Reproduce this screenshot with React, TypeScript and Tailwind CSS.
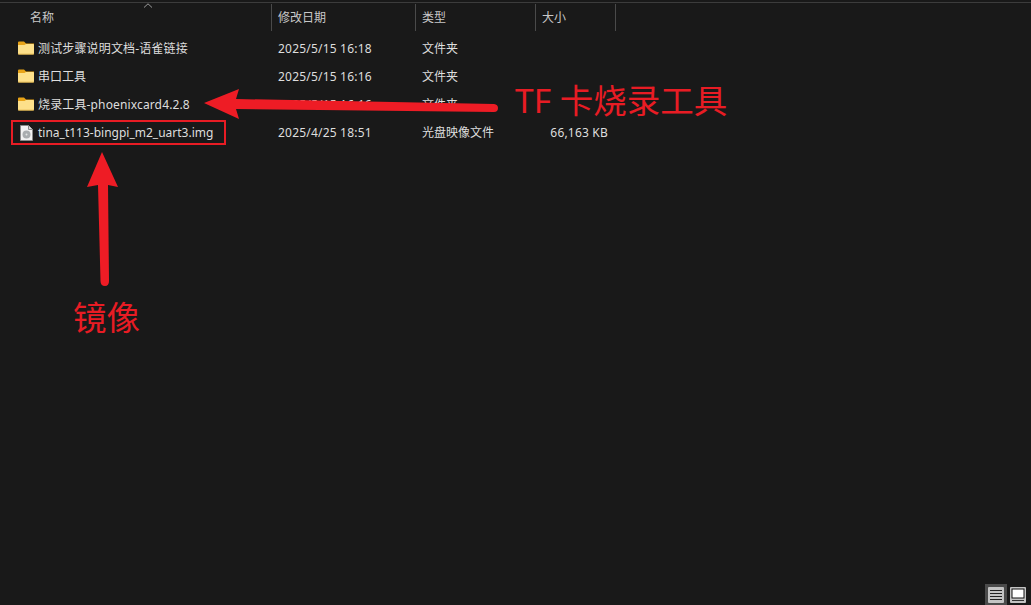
const font = 'font-["Noto_Sans","Noto_Sans_CJK_SC",sans-serif]'

const rows = [
  { name: '测试步骤说明文档-语雀链接', date: '2025/5/15 16:18', type: '文件夹', size: '', icon: 'folder', track: 'tracking-[0.15px]' },
  { name: '串口工具', date: '2025/5/15 16:16', type: '文件夹', size: '', icon: 'folder', track: '' },
  { name: '烧录工具-phoenixcard4.2.8', date: '2025/5/15 16:16', type: '文件夹', size: '', icon: 'folder', track: 'tracking-[0.14px]' },
  { name: 'tina_t113-bingpi_m2_uart3.img', date: '2025/4/25 18:51', type: '光盘映像文件', size: '66,163 KB', icon: 'disc', track: '' },
]

function FolderIcon() {
  return (
    <svg width="16" height="14" viewBox="0 0 16 14" className="mb-[2px] shrink-0">
      <path d="M0 1.5 Q0 0.5 1 0.5 H6 L8 2.5 H16 V5 H0 Z" fill="#e8a317" />
      <path d="M0 4 H6.5 L8 3 H15 Q16 3 16 4 V12.5 Q16 13.5 15 13.5 H1 Q0 13.5 0 12.5 Z" fill="#fde08a" />
      <path d="M0 12.7 H16 V13 Q16 13.5 15 13.5 H1 Q0 13.5 0 13 Z" fill="#d9a93f" />
    </svg>
  )
}

function DiscIcon() {
  return (
    <svg width="13" height="16" viewBox="0 0 13 16" className="shrink-0">
      <path d="M0.5 0.5 H8.5 L12.5 4.5 V15.5 H0.5 Z" fill="#f2f2f2" stroke="#8a8a8a" />
      <path d="M8.5 0.5 V4.5 H12.5" fill="#d8d8d8" stroke="#8a8a8a" />
      <circle cx="6.5" cy="9.5" r="4" fill="#a9adaf" />
      <circle cx="6.5" cy="9.5" r="1" fill="#e4e6e6" />
    </svg>
  )
}

function HeaderCell({ label, className }: { label: string; className: string }) {
  return (
    <div className={`flex h-full items-center border-r border-[#4a4a4a] pl-[6px] ${className}`}>
      {label}
    </div>
  )
}

export default function App() {
  return (
    <div className={`relative flex h-[605px] w-[1031px] flex-col overflow-hidden bg-[#191919] text-[12px] text-[#dedede] ${font}`}>
      <div className="h-[2px] bg-[#191919]" />
      <div className="h-[1px] bg-[#3c3c3c]" />

      <div className="relative flex h-[28px] pt-[1px] text-[#c8c8c8]">
        <div className="flex h-full w-[272px] items-center border-r border-[#4a4a4a] pl-[30px]">名称</div>
        <HeaderCell label="修改日期" className="w-[144px]" />
        <HeaderCell label="类型" className="w-[120px]" />
        <HeaderCell label="大小" className="w-[80px]" />
        <svg width="10" height="5" viewBox="0 0 10 5" className="absolute left-[143px] top-[0px]">
          <path d="M1 4.5 L5 0.8 L9 4.5" fill="none" stroke="#9a9a9a" />
        </svg>
      </div>

      <div className="mt-[4px] flex flex-1 flex-col">
        {rows.map((row) => (
          <div key={row.name} className="flex h-[28px] items-center">
            <div className="flex w-[272px] items-center gap-[4px] pl-[18px]">
              <div className="flex w-[16px] justify-center">
                {row.icon === 'folder' ? <FolderIcon /> : <DiscIcon />}
              </div>
              <span className={`whitespace-nowrap ${row.track}`}>{row.name}</span>
            </div>
            <div className="w-[144px] pl-[6px] tracking-[0.2px]">{row.date}</div>
            <div className="w-[120px] pl-[6px]">{row.type}</div>
            <div className="w-[80px] pr-[8px] text-right tracking-[0.2px]">{row.size}</div>
          </div>
        ))}
      </div>

      <div className="flex h-[21px] justify-end gap-[3px] pr-[5px]">
        <div className="flex w-[22px] items-center justify-center bg-[#4b4b4b]">
          <svg width="16" height="16" viewBox="0 0 16 16">
            <rect width="16" height="16" rx="1" fill="#c4c4c4" />
            <path d="M2 3.5 H14 M2 6.5 H14 M2 9.5 H14 M2 12.5 H14" stroke="#222" />
          </svg>
        </div>
        <div className="flex w-[16px] items-center justify-center">
          <svg width="16" height="16" viewBox="0 0 16 16">
            <rect width="16" height="16" rx="1" fill="#c4c4c4" />
            <rect x="2" y="2" width="12" height="9" fill="#fff" stroke="#111" />
            <path d="M2 13.5 H14" stroke="#333" />
          </svg>
        </div>
      </div>

      {/* annotations drawn over the window */}
      <div className="absolute left-[11px] top-[120px] h-[25px] w-[215px] border-2 border-[#e81c24]" />
      <svg width="1031" height="605" viewBox="0 0 1031 605" className="pointer-events-none absolute left-0 top-0">
        <path d="M204 103 L239 89 L236 99 L494 104 Q498 104.500 498 108 Q498 112 494 112 L236 109 L239 119 Z" fill="#ee1c25" />
        <path d="M102 152 L118 187 L108 185 L109 281 Q109 286 105 286 Q100.500 286 100.500 281 L98 185 L87 187 Z" fill="#ee1c25" />
      </svg>
      <div className="absolute left-[515px] top-[76px] whitespace-nowrap text-[33.5px] leading-[48px] text-[#e81c24]">TF 卡烧录工具</div>
      <div className="absolute left-[73px] top-[294px] whitespace-nowrap text-[33.5px] leading-[46px] text-[#e81c24]">镜像</div>
    </div>
  )
}
